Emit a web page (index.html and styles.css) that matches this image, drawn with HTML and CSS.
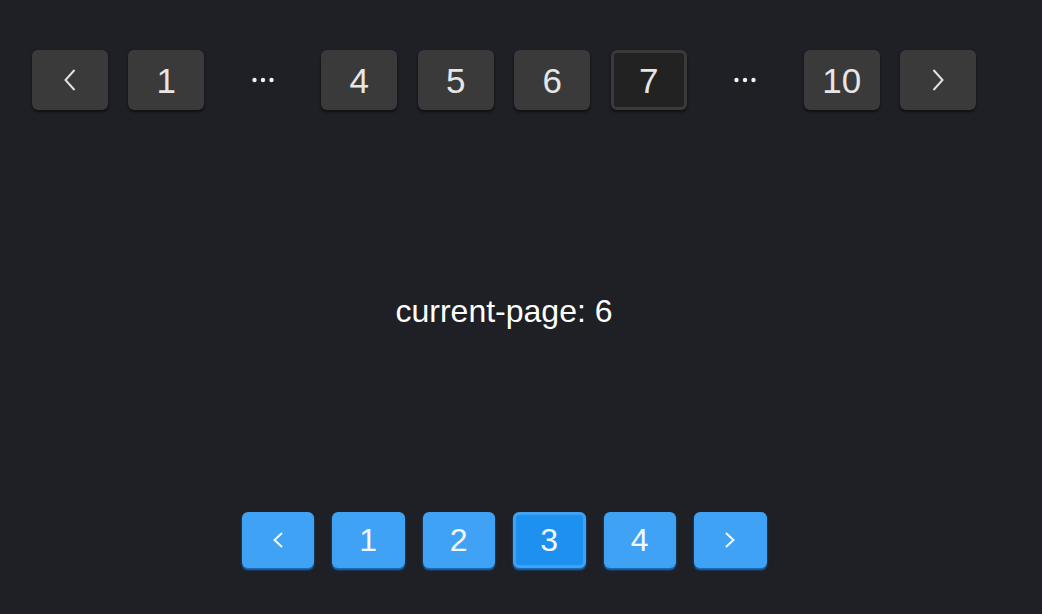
FILE: index.html
```html
<!DOCTYPE html>
<html>
<head>
<meta charset="utf-8">
<link rel="stylesheet" href="styles.css">
</head>
<body>
<div class="page">
  <nav class="pager pager-dark">
    <button class="pg pg-arrow"><svg width="12" height="22" viewBox="0 0 12 22"><path d="M10.5 1 L1.5 11 L10.5 21" fill="none" stroke="currentColor" stroke-width="2"/></svg></button>
    <button class="pg">1</button>
    <span class="pg pg-ellipsis"><svg width="22" height="6" viewBox="0 0 22 6"><circle cx="2.5" cy="3" r="2.2"/><circle cx="11" cy="3" r="2.2"/><circle cx="19.5" cy="3" r="2.2"/></svg></span>
    <button class="pg">4</button>
    <button class="pg">5</button>
    <button class="pg">6</button>
    <button class="pg is-active">7</button>
    <span class="pg pg-ellipsis"><svg width="22" height="6" viewBox="0 0 22 6"><circle cx="2.5" cy="3" r="2.2"/><circle cx="11" cy="3" r="2.2"/><circle cx="19.5" cy="3" r="2.2"/></svg></span>
    <button class="pg">10</button>
    <button class="pg pg-arrow"><svg width="12" height="22" viewBox="0 0 12 22"><path d="M1.5 1 L10.5 11 L1.5 21" fill="none" stroke="currentColor" stroke-width="2"/></svg></button>
  </nav>

  <p class="status">current-page: 6</p>

  <nav class="pager pager-blue">
    <button class="pg pg-arrow"><svg width="10" height="16" viewBox="0 0 10 16"><path d="M9 1 L1.5 8 L9 15" fill="none" stroke="currentColor" stroke-width="2"/></svg></button>
    <button class="pg">1</button>
    <button class="pg">2</button>
    <button class="pg is-active">3</button>
    <button class="pg">4</button>
    <button class="pg pg-arrow"><svg width="10" height="16" viewBox="0 0 10 16"><path d="M1 1 L8.5 8 L1 15" fill="none" stroke="currentColor" stroke-width="2"/></svg></button>
  </nav>
</div>
</body>
</html>
```

FILE: styles.css
```css
html, body {
  margin: 0;
  padding: 0;
  background: #1e2025;
}

body {
  font-family: "Liberation Sans", Arial, sans-serif;
  color: #ffffff;
  height: 614px;
  overflow: hidden;
}

.page {
  width: 1008px;
  display: flex;
  flex-direction: column;
  align-items: center;
}

.pager {
  display: flex;
  align-items: center;
}

.pg {
  box-sizing: border-box;
  display: flex;
  align-items: center;
  justify-content: center;
  border: none;
  padding: 0;
  margin: 0;
  font-family: inherit;
  line-height: 1;
}

/* dark pager */
.pager-dark {
  margin-top: 50px;
  gap: 20.5px;
}

.pager-dark .pg {
  width: 76px;
  height: 60px;
  border-radius: 6px;
  background: #3a3a3a;
  color: #e6e6e6;
  font-size: 35px;
  box-shadow: 0 2px 3px rgba(0, 0, 0, 0.55);
}

.pager-dark .pg.is-active {
  background: #222222;
  border: 3px solid #3a3a3a;
}

.pager-dark .pg-ellipsis {
  background: transparent;
  box-shadow: none;
  color: #f2f2f2;
}

.pg-ellipsis svg {
  fill: currentColor;
}

.pager-dark .pg-arrow {
  color: #e0e0e0;
}

/* status text */
.status {
  margin: 183px 0 0;
  font-size: 32px;
  line-height: 37px;
  color: #ffffff;
}

/* blue pager */
.pager-blue {
  margin-top: 182px;
  gap: 18px;
}

.pager-blue .pg {
  width: 72.5px;
  height: 56px;
  border-radius: 6px;
  background: #3fa2f4;
  color: #f4f9ff;
  font-size: 32px;
  box-shadow: 0 2px 2px #1a6fc0;
}

.pager-blue .pg.is-active {
  background: #1e90f0;
  border: 3px solid #3fa2f4;
}
```
